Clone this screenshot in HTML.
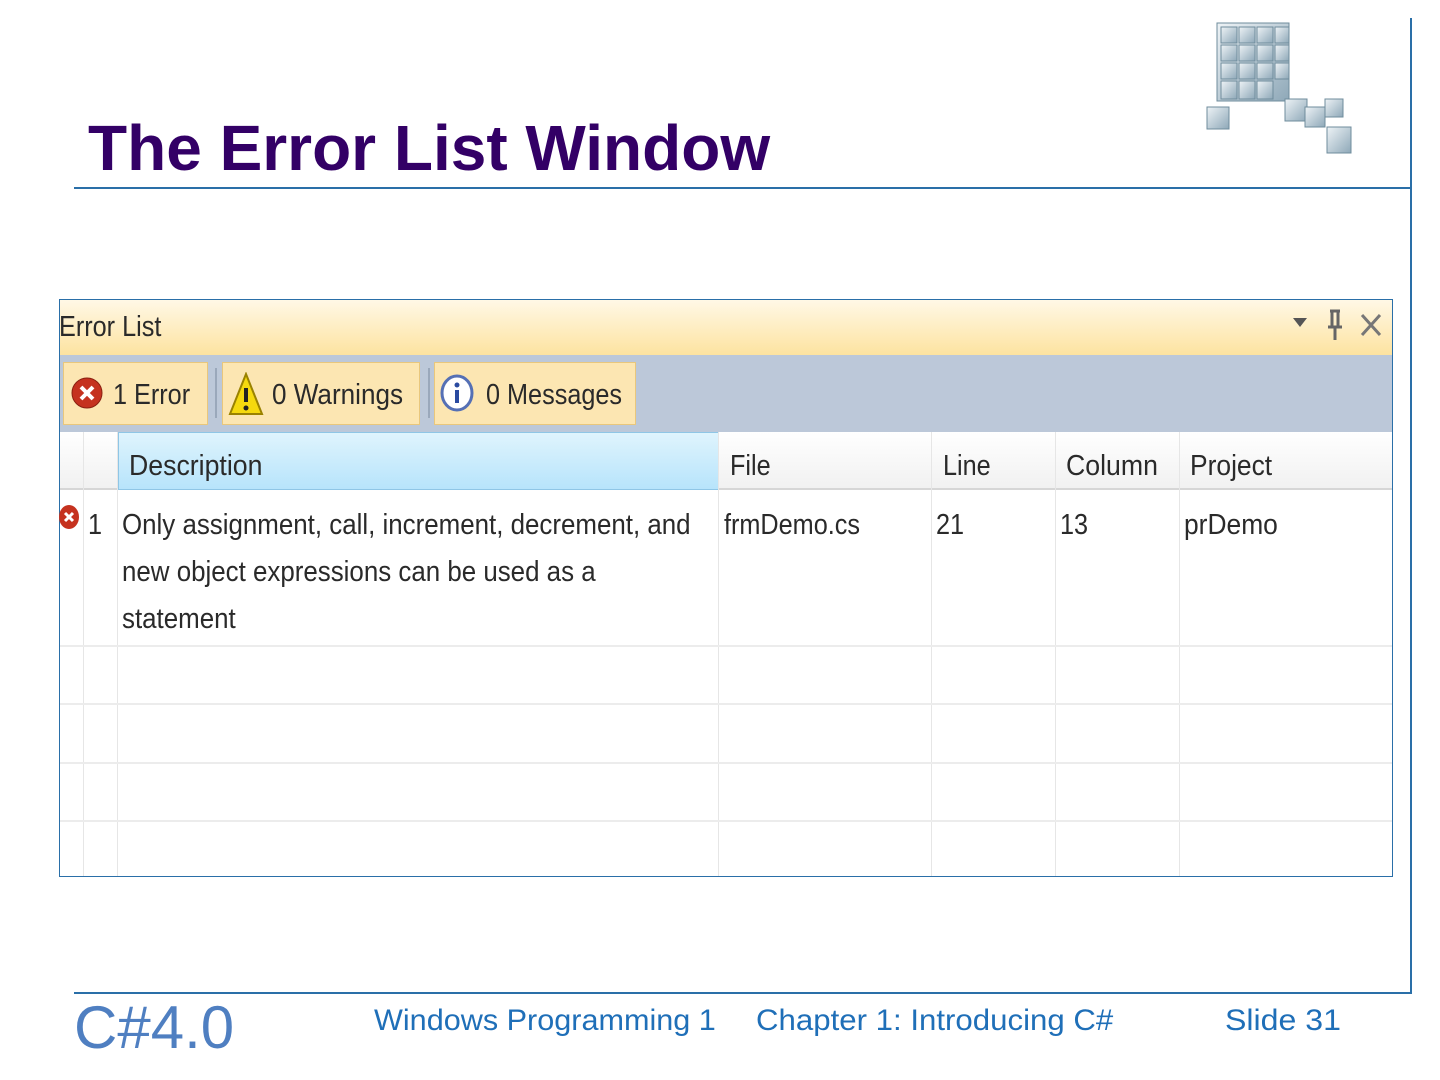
<!DOCTYPE html>
<html><head><meta charset="utf-8"><style>
*{margin:0;padding:0;box-sizing:border-box}
body{width:1440px;height:1080px;background:#fff;position:relative;overflow:hidden;font-family:"Liberation Sans",sans-serif}
.a{position:absolute}
.t{position:absolute;font-size:29px;color:#2a2a2a;transform:scaleX(.87);transform-origin:0 0;white-space:nowrap;line-height:34px}
.vl{position:absolute;width:1px;background:#e6e6e6}
.hl{position:absolute;height:2px;background:#ececec;left:60px;width:1332px}
.btn{position:absolute;top:362px;height:63px;background:#fce6b2;border:1px solid #e9c77c}
.f{position:absolute;top:1004px;font-size:30px;color:#1f6fb8;line-height:34px;transform-origin:0 0;white-space:nowrap}
</style></head><body>
<div class="a" style="left:88px;top:111px;font-size:64px;font-weight:bold;color:#330066;">The Error List Window</div>
<div class="a" style="left:74px;top:187px;width:1338px;height:2px;background:#2a6fa8"></div>
<div class="a" style="left:1410px;top:18px;width:2px;height:976px;background:#2a6fa8"></div>
<div class="a" style="left:74px;top:992px;width:1338px;height:2px;background:#2a6fa8"></div>

<svg class="a" style="left:1195px;top:15px" width="180" height="150" viewBox="0 0 180 150">
<defs><linearGradient id="c" x1="0" y1="0" x2="1" y2="1"><stop offset="0" stop-color="#eef3f6"/><stop offset="1" stop-color="#8ea8b8"/></linearGradient></defs>
<g fill="url(#c)" stroke="#6f8c9c" stroke-width="1">
<rect x="22" y="8" width="72" height="78"/>
<rect x="26" y="12" width="16" height="16"/><rect x="44" y="12" width="16" height="16"/><rect x="62" y="12" width="16" height="16"/><rect x="80" y="12" width="14" height="16"/>
<rect x="26" y="30" width="16" height="16"/><rect x="44" y="30" width="16" height="16"/><rect x="62" y="30" width="16" height="16"/><rect x="80" y="30" width="14" height="16"/>
<rect x="26" y="48" width="16" height="16"/><rect x="44" y="48" width="16" height="16"/><rect x="62" y="48" width="16" height="16"/><rect x="80" y="48" width="14" height="16"/>
<rect x="26" y="66" width="16" height="18"/><rect x="44" y="66" width="16" height="18"/><rect x="62" y="66" width="16" height="18"/>
<rect x="12" y="92" width="22" height="22"/><rect x="90" y="84" width="22" height="22"/><rect x="110" y="92" width="20" height="20"/><rect x="130" y="84" width="18" height="18"/><rect x="132" y="112" width="24" height="26"/>
</g></svg>

<div class="a" style="left:59px;top:299px;width:1334px;height:578px;border:1px solid #2a6fa8;background:#fff"></div>
<div class="a" style="left:60px;top:300px;width:1332px;height:55px;background:linear-gradient(#fff8e6,#fde3a0)"></div>
<div class="t" style="left:59px;top:310px">Error List</div>
<div class="a" style="left:1293px;top:318px;width:0;height:0;border-left:7px solid transparent;border-right:7px solid transparent;border-top:9px solid #555"></div>
<svg class="a" style="left:1324px;top:308px" width="22" height="34"><path d="M6 3h10M8 3v16M14 3v16M4 19h14M11 19v13" stroke="#666" stroke-width="3" fill="none"/></svg>
<svg class="a" style="left:1359px;top:312px" width="24" height="26"><path d="M3 3l18 20M21 3L3 23" stroke="#777" stroke-width="3"/></svg>
<div class="a" style="left:60px;top:355px;width:1332px;height:77px;background:#bcc8d9"></div>
<div class="btn" style="left:63px;width:145px"></div>
<div class="btn" style="left:222px;width:198px"></div>
<div class="btn" style="left:434px;width:202px"></div>
<div class="a" style="left:215px;top:368px;width:2px;height:50px;background:#9aa8bb"></div>
<div class="a" style="left:428px;top:368px;width:2px;height:50px;background:#9aa8bb"></div>
<svg class="a" style="left:70px;top:376px" width="34" height="34"><circle cx="17" cy="17" r="15" fill="#c5321f" stroke="#8a2010"/><path d="M11 11l12 12M23 11l-12 12" stroke="#fff" stroke-width="4"/></svg>
<div class="t" style="left:113px;top:378px">1 Error</div>
<svg class="a" style="left:228px;top:372px" width="36" height="44"><path d="M18 2L34 42H2Z" fill="#f5d90e" stroke="#9a8200" stroke-width="2"/><path d="M18 16v14" stroke="#222" stroke-width="4"/><circle cx="18" cy="36" r="2.5" fill="#222"/></svg>
<div class="t" style="left:272px;top:378px;transform:scaleX(.9)">0 Warnings</div>
<svg class="a" style="left:440px;top:374px" width="34" height="38"><ellipse cx="17" cy="19" rx="15" ry="17" fill="#fff" stroke="#5570b5" stroke-width="3"/><circle cx="17" cy="11" r="2.5" fill="#2a4aa0"/><path d="M17 16v13" stroke="#2a4aa0" stroke-width="4"/></svg>
<div class="t" style="left:486px;top:378px">0 Messages</div>

<div class="a" style="left:60px;top:432px;width:1332px;height:58px;background:linear-gradient(#fff,#f1f1f1);border-bottom:2px solid #d6d6d6"></div>
<div class="a" style="left:118px;top:432px;width:601px;height:58px;background:linear-gradient(#dff4fd,#b7e4fb);border:1px solid #8fc6e6"></div>
<div class="t" style="left:129px;top:449px;transform:scaleX(.92)">Description</div>
<div class="t" style="left:730px;top:449px">File</div>
<div class="t" style="left:943px;top:449px">Line</div>
<div class="t" style="left:1066px;top:449px;transform:scaleX(.92)">Column</div>
<div class="t" style="left:1190px;top:449px;transform:scaleX(.91)">Project</div>

<div class="vl" style="left:83px;top:432px;height:444px"></div>
<div class="vl" style="left:117px;top:432px;height:444px"></div>
<div class="vl" style="left:718px;top:432px;height:444px"></div>
<div class="vl" style="left:931px;top:432px;height:444px"></div>
<div class="vl" style="left:1055px;top:432px;height:444px"></div>
<div class="vl" style="left:1179px;top:432px;height:444px"></div>
<div class="hl" style="top:645px"></div>
<div class="hl" style="top:703px"></div>
<div class="hl" style="top:762px"></div>
<div class="hl" style="top:820px"></div>

<svg class="a" style="left:59px;top:504px" width="22" height="26"><ellipse cx="10" cy="13" rx="10" ry="12" fill="#c5321f"/><path d="M6 9l8 8M14 9l-8 8" stroke="#fff" stroke-width="3"/></svg>
<div class="t" style="left:88px;top:508px">1</div>
<div class="t" style="left:122px;top:502px;line-height:47px;transform:scaleX(.893)">Only assignment, call, increment, decrement, and<br>new object expressions can be used as a<br>statement</div>
<div class="t" style="left:724px;top:508px">frmDemo.cs</div>
<div class="t" style="left:936px;top:508px">21</div>
<div class="t" style="left:1060px;top:508px">13</div>
<div class="t" style="left:1184px;top:508px;transform:scaleX(.91)">prDemo</div>

<div class="a" style="left:74px;top:994px;font-size:60px;color:#4f7fc1;line-height:68px">C#4.0</div>
<div class="f" style="left:374px;transform:scaleX(1.02)">Windows Programming 1</div>
<div class="f" style="left:756px;transform:scaleX(1.04)">Chapter 1: Introducing C#</div>
<div class="f" style="left:1225px;transform:scaleX(1.07)">Slide 31</div>
</body></html>
